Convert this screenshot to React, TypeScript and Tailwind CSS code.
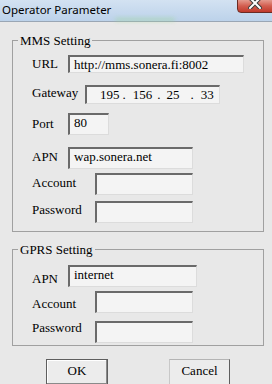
import React from "react";

const Field = ({ className, children }: { className: string; children?: React.ReactNode }) => (
  <div
    className={
      "border-t-2 border-l-2 border-b border-r border-t-[#6a6a6a] border-l-[#6a6a6a] border-b-[#dcdcdc] border-r-[#dcdcdc] bg-[#f4f4f4] pl-[4px] leading-[15px] text-black whitespace-nowrap overflow-hidden " +
      className
    }
  >
    {children}
  </div>
);

const Legend = ({ children }: { children: React.ReactNode }) => (
  <legend className="ml-[5px] px-[2px] leading-[15px] text-black">{children}</legend>
);

export default function App() {
  return (
    <div
      className="w-[272px] h-[384px] overflow-hidden bg-[#e8e8e8] flex flex-col text-[13px]"
      style={{ fontFamily: '"Liberation Serif", "Times New Roman", serif' }}
    >
      {/* title bar */}
      <div className="relative h-[22px] shrink-0 border-b border-[#9aa6b4] bg-gradient-to-b from-[#d3e2f2] to-[#bcd2ea]">
        <div
          className="absolute left-[2px] top-[2px] text-[11.5px] leading-[16px] text-black"
          style={{ fontFamily: '"Noto Sans", "Open Sans", sans-serif' }}
        >
          Operator Parameter
        </div>
        <div className="absolute left-[115px] top-[18px] w-[60px] h-[3px] rounded-full bg-[#9fd79a] opacity-60 blur-[2px]" />
        <div className="absolute left-[237px] top-[-1px] w-[42px] h-[14px] rounded-bl-[4px] border border-[#6b2b24] bg-gradient-to-b from-[#e49a8e] via-[#d25d4f] to-[#c0392b] flex justify-center">
          <svg width="14" height="12" viewBox="0 0 14 12" className="-mt-[3px] -ml-[6px]">
            <path d="M2 1 L12 11 M12 1 L2 11" stroke="#3a3a3a" strokeWidth="4" strokeLinecap="square" />
            <path d="M2 1 L12 11 M12 1 L2 11" stroke="#ffffff" strokeWidth="2" strokeLinecap="square" />
          </svg>
        </div>
      </div>

      {/* MMS Setting */}
      <fieldset className="ml-[12px] mt-[11px] w-[252px] border border-[#a0a0a0]">
        <Legend>MMS Setting</Legend>
        <div className="flex flex-col pl-[19px] pt-[7px]">
          <div className="flex items-start h-[30px]">
            <span className="w-[36px] mt-[1px] leading-[15px]">URL</span>
            <Field className="w-[176px] h-[18px] pl-[3px]">http://mms.sonera.fi:8002</Field>
          </div>
          <div className="flex items-start h-[28px]">
            <span className="w-[53px] leading-[15px]">Gateway</span>
            <Field className="w-[135px] h-[19px] pl-[0px]">
              <div className="flex">
                <span className="ml-[9px]">195</span>
                <span className="ml-[3px]">.</span>
                <span className="ml-[7px]">156</span>
                <span className="ml-[5px]">.</span>
                <span className="ml-[6px]">25</span>
                <span className="ml-[11px]">.</span>
                <span className="ml-[7px]">33</span>
              </div>
            </Field>
          </div>
          <div className="flex items-start h-[34px]">
            <span className="w-[36px] mt-[3px] leading-[15px]">Port</span>
            <Field className="w-[41px] h-[22px]">80</Field>
          </div>
          <div className="flex items-start h-[26px]">
            <span className="w-[36px] mt-[2px] leading-[15px]">APN</span>
            <Field className="w-[125px] h-[22px]">wap.sonera.net</Field>
          </div>
          <div className="flex items-start h-[28px]">
            <span className="w-[63px] mt-[2px] leading-[15px]">Account</span>
            <Field className="w-[98px] h-[22px]" />
          </div>
          <div className="flex items-start h-[30px]">
            <span className="w-[63px] mt-[1px] leading-[15px]">Password</span>
            <Field className="w-[98px] h-[22px]" />
          </div>
        </div>
      </fieldset>

      {/* GPRS Setting */}
      <fieldset className="ml-[12px] mt-[10px] w-[252px] border border-[#a0a0a0]">
        <Legend>GPRS Setting</Legend>
        <div className="flex flex-col pl-[19px] pt-[8px]">
          <div className="flex items-start h-[26px]">
            <span className="w-[36px] mt-[6px] leading-[15px]">APN</span>
            <Field className="w-[129px] h-[22px]">internet</Field>
          </div>
          <div className="flex items-start h-[29px]">
            <span className="w-[63px] mt-[5px] leading-[15px]">Account</span>
            <Field className="w-[98px] h-[22px]" />
          </div>
          <div className="flex items-start h-[25px]">
            <span className="w-[63px] leading-[15px]">Password</span>
            <Field className="w-[98px] h-[22px] mt-[1px]" />
          </div>
        </div>
      </fieldset>

      {/* buttons */}
      <div className="flex mt-[13px] pl-[46px] gap-[61px]">
        <button className="w-[62px] h-[26px] border border-[#5e5e5e] bg-[#ececec] shadow-[inset_-1px_-1px_0_#8a8a8a,inset_1px_1px_0_#ffffff] leading-[15px] pb-[4px] text-black">
          OK
        </button>
        <button className="w-[61px] h-[26px] border border-t-[#b4b4b4] border-l-[#c8c8c8] border-r-[#5e5e5e] border-b-[#5e5e5e] bg-[#ececec] leading-[15px] pb-[4px] text-black">
          Cancel
        </button>
      </div>
    </div>
  );
}
